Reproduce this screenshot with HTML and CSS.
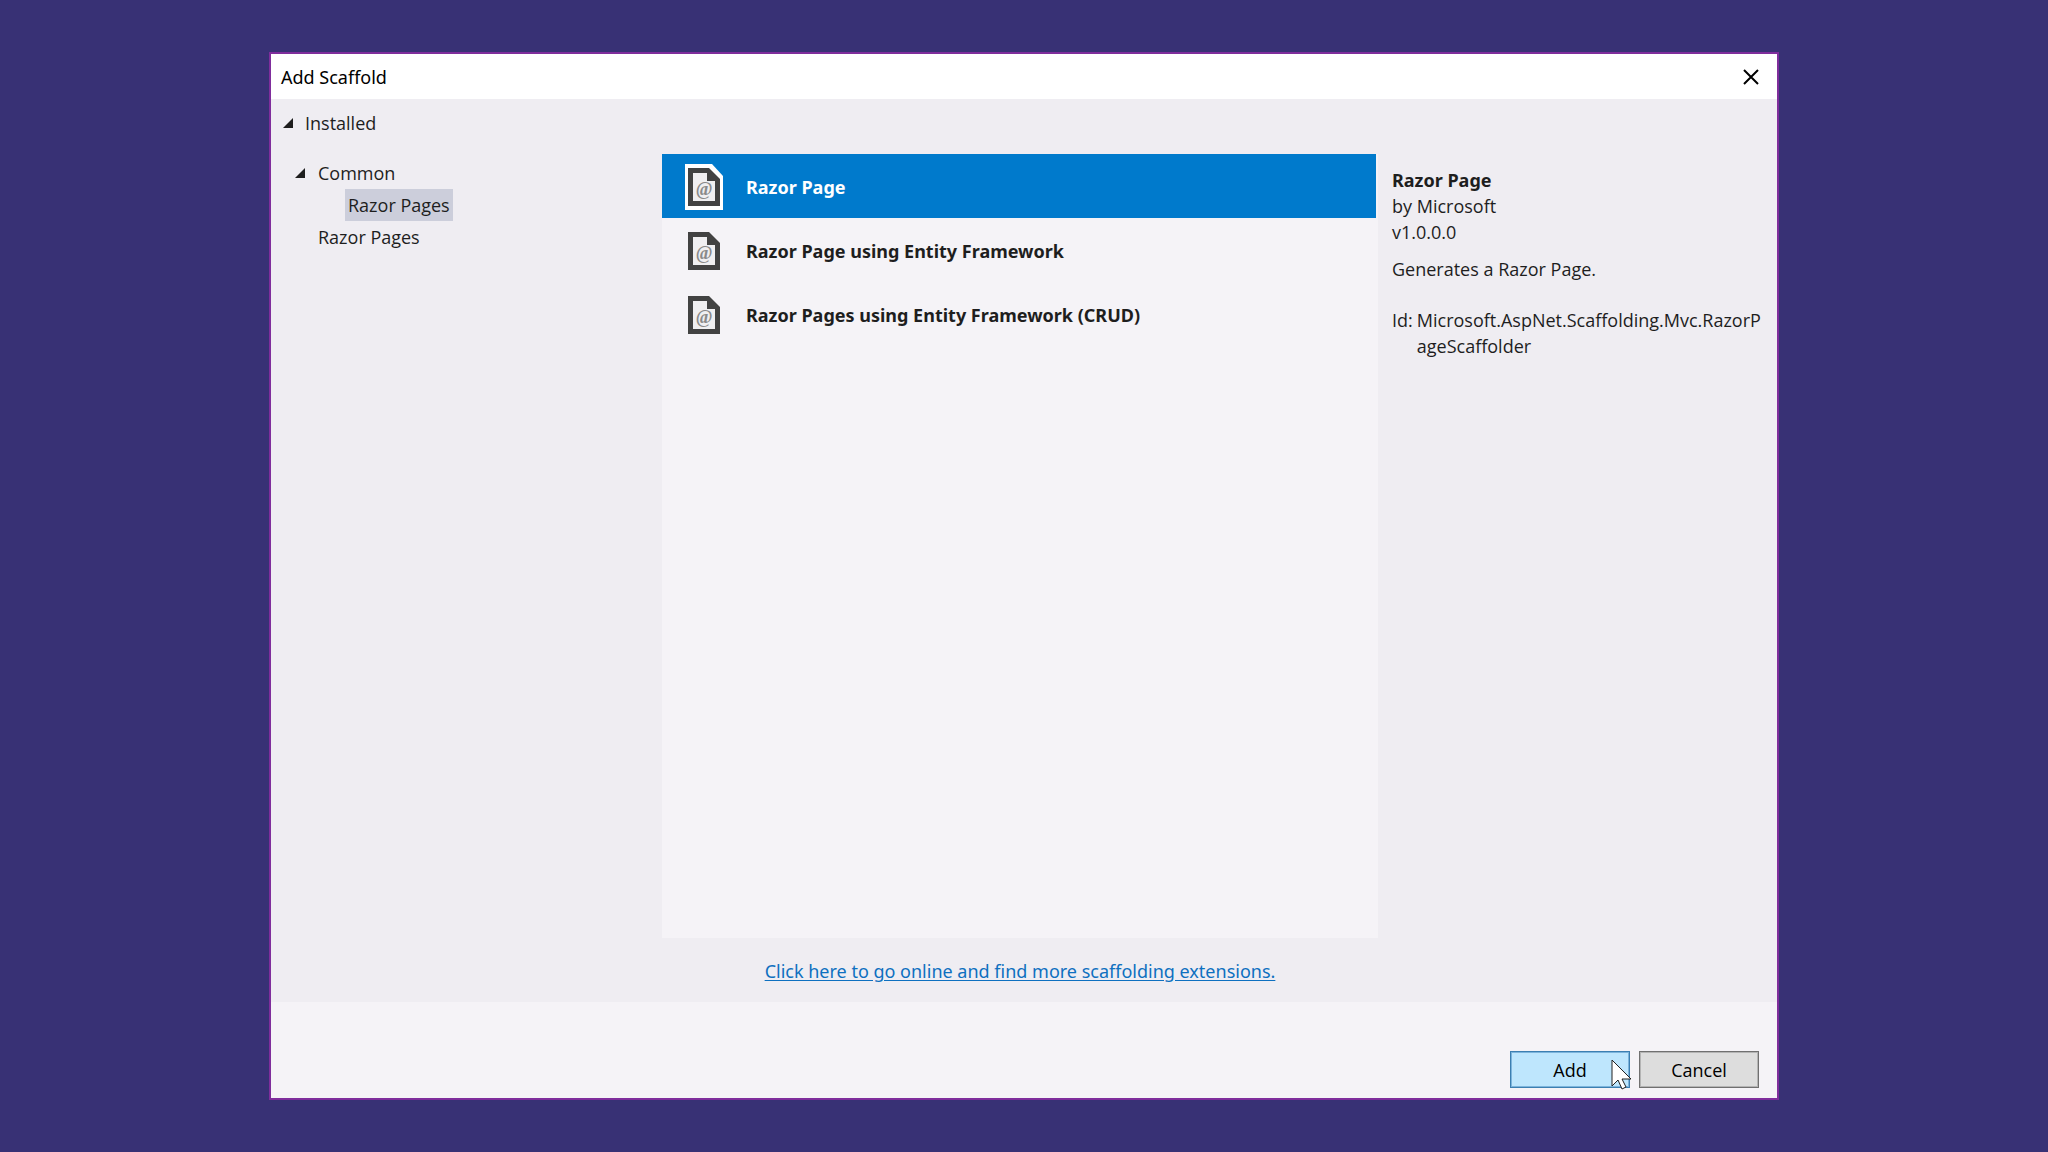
FILE: index.html
```
<!DOCTYPE html>
<html lang="en">
<head>
<meta charset="utf-8">
<title>Add Scaffold</title>
<meta name="viewport" content="width=device-width, initial-scale=1">
<link rel="stylesheet" href="styles.css">
</head>
<body>

<main class="dialog">
  <header class="title-bar">
    <h1>Add Scaffold</h1>
    <button class="close" aria-label="Close">
      <svg width="16" height="16" viewBox="0 0 16 16"><path d="M1 1L15 15M15 1L1 15"/></svg>
    </button>
  </header>

  <div class="content">
    <nav class="tree">
      <button class="node installed"><span class="arrow"></span>Installed</button>
      <button class="node common"><span class="arrow"></span>Common</button>
      <button class="node child selected">Razor Pages</button>
      <button class="node leaf">Razor Pages</button>
    </nav>

    <section class="center">
      <ul class="scaffolds">
        <li>
          <button class="scaffold active">
            <svg class="icon" viewBox="0 0 38 46">
              <path class="halo" d="M0 0H27L38 12V46H0Z"/>
              <path class="frame" d="M3 4H24L35 15V42H3Z"/>
              <path class="paper" d="M8 9H22V17H30V37H8Z"/>
              <text x="19" y="31" text-anchor="middle">@</text>
            </svg>
            Razor Page
          </button>
        </li>
        <li>
          <button class="scaffold">
            <svg class="icon" viewBox="0 0 38 46">
              <path class="frame" d="M3 4H24L35 15V42H3Z"/>
              <path class="paper" d="M8 9H22V17H30V37H8Z"/>
              <text x="19" y="31" text-anchor="middle">@</text>
            </svg>
            Razor Page using Entity Framework
          </button>
        </li>
        <li>
          <button class="scaffold">
            <svg class="icon" viewBox="0 0 38 46">
              <path class="frame" d="M3 4H24L35 15V42H3Z"/>
              <path class="paper" d="M8 9H22V17H30V37H8Z"/>
              <text x="19" y="31" text-anchor="middle">@</text>
            </svg>
            Razor Pages using Entity Framework (CRUD)
          </button>
        </li>
      </ul>
      <a class="online" href="#">Click here to go online and find more scaffolding extensions.</a>
    </section>

    <aside class="details">
      <h2>Razor Page</h2>
      <p>by Microsoft</p>
      <p>v1.0.0.0</p>
      <p class="description">Generates a Razor Page.</p>
      <dl>
        <dt>Id:</dt>
        <dd>Microsoft.AspNet.Scaffolding.Mvc.RazorP<wbr>ageScaffolder</dd>
      </dl>
    </aside>
  </div>

  <footer class="actions">
    <button class="btn add">Add
      <svg class="cursor" width="22" height="32" viewBox="0 0 22 32"><path d="M1 1V27L7 21L11 30L15 28L11 20H20Z"/></svg>
    </button>
    <button class="btn">Cancel</button>
  </footer>
</main>

</body>
</html>
```

FILE: styles.css
```
* {
  box-sizing: border-box;
}

body {
  margin: 0;
  min-height: 100vh;
  padding: 52px 269px;
  display: flex;
  background-color: #383175;
  color: #1e1e1e;
  font-family: "Open Sans", "Noto Sans", sans-serif;
  font-size: 18px;
  line-height: 26px;
}

button {
  font: inherit;
  color: inherit;
  background: none;
  border: none;
  padding: 0;
  text-align: left;
}

h1, h2, p, ul, dl, dd {
  margin: 0;
  padding: 0;
}

h1, h2, .scaffold, .online {
  font-family: "Noto Sans", "Open Sans", sans-serif;
}

.dialog {
  flex: 1;
  display: flex;
  flex-direction: column;
  border: 2px solid #7f2d9c;
  background-color: #f5f3f7;
}

.title-bar {
  display: flex;
  align-items: center;
  justify-content: space-between;
  height: 45px;
  padding: 0 18px 0 10px;
  background-color: #fff;
  color: #000;
}

.title-bar h1 {
  font-size: 18px;
  font-weight: normal;
}

.close {
  display: flex;
}

.close path {
  fill: none;
  stroke: #000;
  stroke-width: 2;
}

.content {
  flex: 1;
  display: grid;
  grid-template-columns: 391fr 716fr 399fr;
  background-color: #efedf2;
}

/* left tree */
.tree {
  display: flex;
  flex-direction: column;
  align-items: flex-start;
  padding-top: 8px;
}

.node {
  display: flex;
  align-items: center;
  height: 32px;
}

.arrow {
  width: 10px;
  height: 10px;
  margin-right: 12px;
  background-color: #1e1e1e;
  clip-path: polygon(100% 0, 100% 100%, 0 100%);
}

.installed {
  margin-left: 12px;
  margin-bottom: 18px;
}

.common {
  margin-left: 24px;
}

.common .arrow {
  margin-right: 13px;
}

.child {
  margin-left: 74px;
  padding: 0 3px;
}

.leaf {
  margin-left: 47px;
}

.selected {
  background-color: #cccedb;
}

/* scaffold list */
.center {
  display: flex;
  flex-direction: column;
  padding-top: 55px;
}

.scaffolds {
  flex: 1;
  list-style: none;
  padding-right: 2px;
  background-color: #f5f3f7;
}

.scaffold {
  display: flex;
  align-items: center;
  gap: 23px;
  width: 100%;
  height: 64px;
  padding-top: 2px;
  padding-left: 23px;
  font-weight: bold;
}

.active {
  background-color: #007acc;
  color: #fff;
}

.icon {
  width: 38px;
  height: 46px;
}

.icon text {
  font-family: "Liberation Serif", serif;
  font-weight: bold;
  font-size: 18px;
  fill: #8a8a8a;
}

.halo {
  fill: #fff;
}

.frame {
  fill: #424242;
}

.paper {
  fill: #f0eff1;
}

.online {
  align-self: center;
  margin: 20px 0 18px;
  color: #0e70c0;
  text-underline-offset: 2px;
}

/* right column */
.details {
  padding: 68px 8px 0 14px;
}

.details h2 {
  font-size: 18px;
  font-weight: bold;
}

.description {
  margin: 11px 0 25px;
}

.details dl {
  display: flex;
  gap: 4px;
}

/* buttons */
.actions {
  display: flex;
  justify-content: flex-end;
  gap: 9px;
  padding: 49px 18px 10px;
}

.btn {
  position: relative;
  width: 120px;
  height: 37px;
  padding-top: 1px;
  border: 1px solid #707070;
  outline: 1px solid #b4b4b4;
  outline-offset: -2px;
  background-color: #dddddd;
  color: #000;
  text-align: center;
}

.add {
  border-color: #3c7fb1;
  outline-color: #7db4dc;
  background-color: #bee6fd;
}

.cursor {
  position: absolute;
  left: 100px;
  top: 7px;
  fill: #fff;
  stroke: #222;
}
```
